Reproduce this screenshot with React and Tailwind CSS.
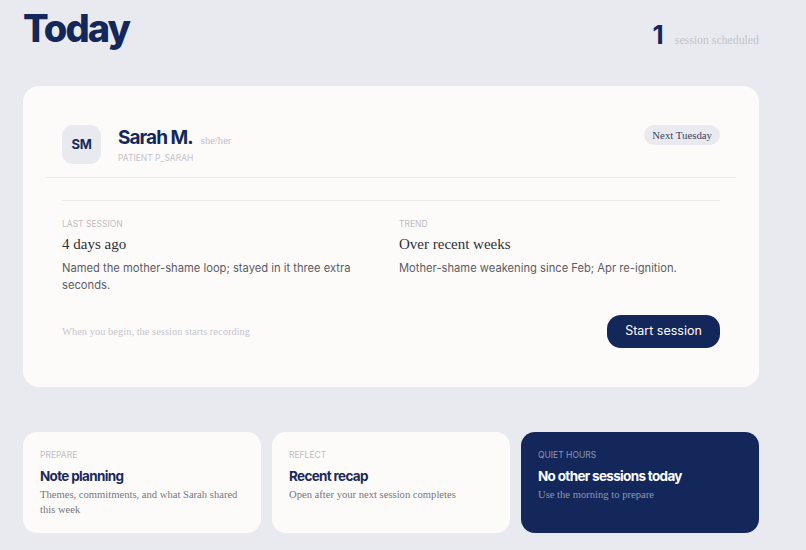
const sans = "font-['Inter','Noto_Sans',sans-serif]";
const serif = "font-['Liberation_Serif','Times_New_Roman',serif]";

function InfoColumn({ label, title, text }) {
  return (
    <div>
      <div className={`${sans} text-[8.5px] leading-[12px] uppercase text-[#bdbdc2]`}>{label}</div>
      <div className={`${serif} mt-[4px] text-[15px] leading-[20px] text-[#2f2f35]`}>{title}</div>
      <p className={`${sans} mt-[6px] text-[11.2px] leading-[17px] text-[#5b5b62] pr-[30px]`}>{text}</p>
    </div>
  );
}

function SmallCard({ label, title, text, dark }) {
  return (
    <div
      className={`h-[101px] rounded-[14px] px-[17px] pt-[17px] ${
        dark ? "bg-[#13275a]" : "bg-[#fdfbfa]"
      }`}
    >
      <div className={`${sans} text-[8.5px] leading-[12px] uppercase ${dark ? "text-[#8d97b5]" : "text-[#bdbdc2]"}`}>
        {label}
      </div>
      <div
        className={`${sans} mt-[6px] text-[13.5px] leading-[18px] font-bold tracking-[-0.05em] ${
          dark ? "text-white" : "text-[#1a2a58]"
        }`}
      >
        {title}
      </div>
      <p className={`${serif} mt-[2px] text-[10.6px] leading-[15px] ${dark ? "text-[#8d97b5]" : "text-[#77777d]"}`}>
        {text}
      </p>
    </div>
  );
}

export default function App() {
  return (
    <div className="w-[806px] h-[550px] bg-[#e8eaf0] pl-[23px] pr-[47px] overflow-hidden">
      {/* header */}
      <div className="flex h-[50px] items-start justify-between pt-[6px]">
        <h1 className={`${sans} text-[38px] leading-[44px] font-extrabold tracking-[-0.05em] text-[#14275a]`}>Today</h1>
        <div className="flex items-baseline gap-[11px] pt-[14px]">
          <span className={`${sans} text-[26px] leading-[30px] font-bold text-[#14275a]`}>1</span>
          <span className={`${serif} text-[11.8px] text-[#c2c4ca]`}>session scheduled</span>
        </div>
      </div>

      {/* main card */}
      <div className="mt-[36px] h-[301px] rounded-[16px] bg-[#fdfbfa] pt-[39px]">
        <div className="flex items-center justify-between px-[39px] h-[39px]">
          <div className="flex items-center">
            <div className="w-[39px] h-[39px] rounded-[11px] bg-[#e8eaf0] flex items-center justify-center">
              <span className={`${sans} text-[13px] font-bold tracking-[-0.03em] text-[#1a2a58]`}>SM</span>
            </div>
            <div className="ml-[17px]">
              <div className="flex items-baseline">
                <span className={`${sans} text-[19px] leading-[24px] font-bold tracking-[-0.05em] text-[#14275a]`}>
                  Sarah M.
                </span>
                <span className={`${serif} ml-[8px] text-[10.6px] text-[#c0c0c5]`}>she/her</span>
              </div>
              <div className={`${sans} mt-[3px] text-[8.5px] leading-[10px] uppercase text-[#c4c4c8]`}>Patient p_sarah</div>
            </div>
          </div>
          <div className="self-start h-[20px] px-[8px] rounded-full bg-[#e8eaf0] flex items-center">
            <span className={`${serif} text-[10.8px] text-[#3b4262]`}>Next Tuesday</span>
          </div>
        </div>

        <div className="mx-[23px] mt-[13px] h-px bg-[#ebe9e9]" />
        <div className="mx-[39px] mt-[22px] h-px bg-[#ebe9e9]" />

        <div className="mx-[39px] mt-[17px] grid grid-cols-[337px_1fr]">
          <InfoColumn
            label="Last session"
            title="4 days ago"
            text="Named the mother-shame loop; stayed in it three extra seconds."
          />
          <InfoColumn
            label="Trend"
            title="Over recent weeks"
            text="Mother-shame weakening since Feb; Apr re-ignition."
          />
        </div>

        <div className="mx-[39px] mt-[21px] flex items-center justify-between">
          <span className={`${serif} text-[10.5px] text-[#c6c6ca]`}>When you begin, the session starts recording</span>
          <button
            type="button"
            className={`${sans} h-[33px] w-[113px] rounded-[14px] bg-[#13275a] text-white text-[12.5px]`}
          >
            Start session
          </button>
        </div>
      </div>

      {/* bottom cards */}
      <div className="mt-[45px] grid grid-cols-3 gap-[11px]">
        <SmallCard label="Prepare" title="Note planning" text="Themes, commitments, and what Sarah shared this week" />
        <SmallCard label="Reflect" title="Recent recap" text="Open after your next session completes" />
        <SmallCard label="Quiet hours" title="No other sessions today" text="Use the morning to prepare" dark />
      </div>
    </div>
  );
}
